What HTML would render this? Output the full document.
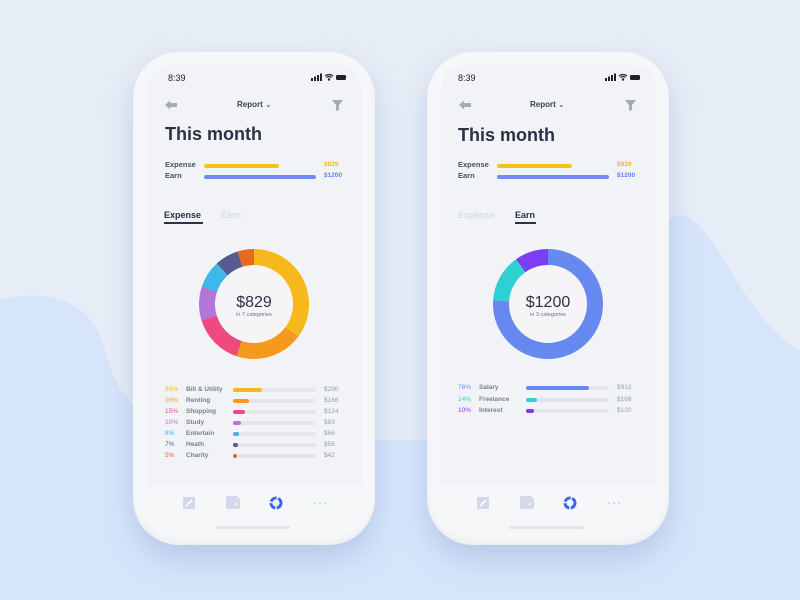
<!DOCTYPE html>
<html><head><meta charset="utf-8"><style>
*{margin:0;padding:0;box-sizing:border-box}
body{width:800px;height:600px;overflow:hidden;background:#e7edf6;font-family:"Liberation Sans",sans-serif;position:relative}
.a{position:absolute}
.phone{position:absolute;top:52px;width:242px;height:493px;border-radius:46px;background:#f6f7f9;box-shadow:0 14px 30px rgba(120,150,200,.35),inset 0 -4px 6px rgba(0,0,0,.04)}
.scr{position:absolute;left:14px;top:13px;width:215px;height:421px;background:#f1f3f6;border-radius:26px 26px 0 0}
.t{position:absolute;white-space:nowrap}
.lbl{font-size:7.5px;color:#4a5064;font-weight:bold}
.row{position:absolute;left:32px;width:180px;height:8px;font-size:6.5px}
.row .p{position:absolute;left:0;top:0}
.row .n{position:absolute;left:21px;top:0;color:#7a7f8c;font-weight:bold}
.row .tr{position:absolute;left:68px;top:2px;width:83px;height:4px;border-radius:2px;background:#e4e6eb}
.row .f{position:absolute;left:0;top:0;height:4px;border-radius:2px}
.row .v{position:absolute;left:159px;top:0;color:#9a9ea8}
</style></head><body>
<svg class="a" style="left:0;top:0" width="800" height="600">
<path d="M0 300 C60 285 95 310 105 350 C118 405 150 430 220 440 L580 440 C640 430 650 300 660 240 C672 195 700 215 730 270 C760 320 785 345 800 350 L800 600 L0 600Z" fill="#d7e5fb"/>
</svg>

<!-- LEFT PHONE -->
<div class="phone" style="left:133px">
<div class="scr"></div>
<div class="t" style="left:35px;top:21px;font-size:9px;color:#222">8:39</div>
<svg class="a" style="left:178px;top:21px" width="36" height="9"><rect x="0" y="5" width="2" height="3" fill="#222"/><rect x="3" y="3.5" width="2" height="4.5" fill="#222"/><rect x="6" y="2" width="2" height="6" fill="#222"/><rect x="9" y="0.5" width="2" height="7.5" fill="#222"/><path d="M14 3 Q18 0 22 3 M15.5 4.5 Q18 2.5 20.5 4.5" stroke="#222" stroke-width="1.2" fill="none"/><circle cx="18" cy="6.5" r="1.2" fill="#222"/><rect x="25" y="2" width="10" height="5" rx="1.2" fill="#222"/></svg>
<svg class="a" style="left:32px;top:48px" width="13" height="10"><path d="M0 5 L5 0.5 L5 3 L12 3 L12 7 L5 7 L5 9.5Z" fill="#a7abb5"/></svg>
<div class="t" style="left:104px;top:48px;font-size:8px;font-weight:bold;color:#3c4254">Report <span style="font-weight:normal">&#8964;</span></div>
<svg class="a" style="left:199px;top:48px" width="11" height="11"><path d="M0 0 H11 L7 5 V10 L4 11 V5Z" fill="#a7abb5"/></svg>
<div class="t" style="left:32px;top:72px;font-size:18px;font-weight:bold;color:#2b3245">This month</div>
<div class="t lbl" style="left:32px;top:108px">Expense</div>
<div class="a" style="left:71px;top:112px;width:75px;height:4px;border-radius:2px;background:#f5c21b"></div>
<div class="t" style="left:191px;top:109px;font-size:6.5px;font-weight:bold;color:#f3bd1c">$829</div>
<div class="t lbl" style="left:32px;top:119px">Earn</div>
<div class="a" style="left:71px;top:123px;width:112px;height:4px;border-radius:2px;background:#6b8ef0"></div>
<div class="t" style="left:191px;top:120px;font-size:6.5px;font-weight:bold;color:#5f84ee">$1200</div>
<div class="t" style="left:31px;top:158px;font-size:9px;font-weight:bold;color:#2b3245">Expense</div>
<div class="a" style="left:31px;top:170px;width:39px;height:2px;background:#2b3245"></div>
<div class="t" style="left:88px;top:158px;font-size:9px;font-weight:bold;color:#d6ddea">Earn</div>
<svg class="a" style="left:66px;top:197px" width="110" height="110" viewBox="0 0 110 110">
<circle cx="55" cy="55" r="39" fill="#f6f4f6"/>
<g transform="rotate(-90 55 55)" fill="none" stroke-width="16">
<circle cx="55" cy="55" r="47" stroke="#f6b91c" stroke-dasharray="103.4 400" stroke-dashoffset="0"/>
<circle cx="55" cy="55" r="47" stroke="#f59a1c" stroke-dasharray="59.1 400" stroke-dashoffset="-103.4"/>
<circle cx="55" cy="55" r="47" stroke="#ee4a80" stroke-dasharray="44.3 400" stroke-dashoffset="-162.5"/>
<circle cx="55" cy="55" r="47" stroke="#b376d6" stroke-dasharray="29.5 400" stroke-dashoffset="-206.8"/>
<circle cx="55" cy="55" r="47" stroke="#3db8e8" stroke-dasharray="23.6 400" stroke-dashoffset="-236.3"/>
<circle cx="55" cy="55" r="47" stroke="#555a90" stroke-dasharray="20.7 400" stroke-dashoffset="-259.9"/>
<circle cx="55" cy="55" r="47" stroke="#e36a1e" stroke-dasharray="14.8 400" stroke-dashoffset="-280.6"/>
</g>
<text x="55" y="58" text-anchor="middle" font-size="16" fill="#2b3245" font-family="Liberation Sans">$829</text>
<text x="55" y="67" text-anchor="middle" font-size="5.5" fill="#6a6f7c" font-family="Liberation Sans">in 7 categories</text>
</svg>
<div class="row" style="top:334px"><span class="p" style="color:#f6b91c">35%</span><span class="n">Bill &amp; Utility</span><div class="tr"><div class="f" style="width:29px;background:#f6b91c"></div></div><span class="v">$290</span></div>
<div class="row" style="top:345px"><span class="p" style="color:#f59a1c">20%</span><span class="n">Renting</span><div class="tr"><div class="f" style="width:16px;background:#f59a1c"></div></div><span class="v">$166</span></div>
<div class="row" style="top:356px"><span class="p" style="color:#ee4a80">15%</span><span class="n">Shopping</span><div class="tr"><div class="f" style="width:12px;background:#ee4a80"></div></div><span class="v">$124</span></div>
<div class="row" style="top:367px"><span class="p" style="color:#b376d6">10%</span><span class="n">Study</span><div class="tr"><div class="f" style="width:8px;background:#b376d6"></div></div><span class="v">$83</span></div>
<div class="row" style="top:378px"><span class="p" style="color:#3db8e8">8%</span><span class="n">Entertain</span><div class="tr"><div class="f" style="width:6px;background:#3db8e8"></div></div><span class="v">$66</span></div>
<div class="row" style="top:389px"><span class="p" style="color:#555a90">7%</span><span class="n">Heath</span><div class="tr"><div class="f" style="width:5px;background:#555a90"></div></div><span class="v">$58</span></div>
<div class="row" style="top:400px"><span class="p" style="color:#e36a1e">5%</span><span class="n">Charity</span><div class="tr"><div class="f" style="width:4px;background:#e36a1e"></div></div><span class="v">$42</span></div>
<svg class="a" style="left:48px;top:443px" width="160" height="16">
<rect x="2" y="2" width="12" height="12" rx="1" fill="#d3d9ea"/><path d="M5 11 L11 5" stroke="#fff" stroke-width="1.5"/>
<rect x="45" y="3" width="14" height="11" rx="2" fill="#d3d9ea"/><rect x="45" y="1" width="12" height="3" rx="1" fill="#d3d9ea"/><rect x="54" y="8" width="2" height="2" fill="#fff"/>
<circle cx="95" cy="8" r="5" fill="none" stroke="#3566ee" stroke-width="3" stroke-dasharray="7 1.5"/>
<circle cx="134" cy="8" r="1" fill="#c9d3ea"/><circle cx="139" cy="8" r="1" fill="#c9d3ea"/><circle cx="144" cy="8" r="1" fill="#c9d3ea"/>
</svg>
<div class="a" style="left:82px;top:474px;width:75px;height:3px;border-radius:2px;background:#e3e5ea"></div>
</div>

<!-- RIGHT PHONE -->
<div class="phone" style="left:427px">
<div class="scr"></div>
<div class="t" style="left:31px;top:21px;font-size:9px;color:#222">8:39</div>
<svg class="a" style="left:178px;top:21px" width="36" height="9"><rect x="0" y="5" width="2" height="3" fill="#222"/><rect x="3" y="3.5" width="2" height="4.5" fill="#222"/><rect x="6" y="2" width="2" height="6" fill="#222"/><rect x="9" y="0.5" width="2" height="7.5" fill="#222"/><path d="M14 3 Q18 0 22 3 M15.5 4.5 Q18 2.5 20.5 4.5" stroke="#222" stroke-width="1.2" fill="none"/><circle cx="18" cy="6.5" r="1.2" fill="#222"/><rect x="25" y="2" width="10" height="5" rx="1.2" fill="#222"/></svg>
<svg class="a" style="left:32px;top:48px" width="13" height="10"><path d="M0 5 L5 0.5 L5 3 L12 3 L12 7 L5 7 L5 9.5Z" fill="#a7abb5"/></svg>
<div class="t" style="left:103px;top:48px;font-size:8px;font-weight:bold;color:#3c4254">Report <span style="font-weight:normal">&#8964;</span></div>
<svg class="a" style="left:198px;top:48px" width="11" height="11"><path d="M0 0 H11 L7 5 V10 L4 11 V5Z" fill="#a7abb5"/></svg>
<div class="t" style="left:31px;top:73px;font-size:18px;font-weight:bold;color:#2b3245">This month</div>
<div class="t lbl" style="left:31px;top:108px">Expense</div>
<div class="a" style="left:70px;top:112px;width:75px;height:4px;border-radius:2px;background:#f5c21b"></div>
<div class="t" style="left:190px;top:109px;font-size:6.5px;font-weight:bold;color:#f3bd1c">$829</div>
<div class="t lbl" style="left:31px;top:119px">Earn</div>
<div class="a" style="left:70px;top:123px;width:112px;height:4px;border-radius:2px;background:#6b8ef0"></div>
<div class="t" style="left:190px;top:120px;font-size:6.5px;font-weight:bold;color:#5f84ee">$1200</div>
<div class="t" style="left:31px;top:158px;font-size:9px;font-weight:bold;color:#d6ddea">Expense</div>
<div class="t" style="left:88px;top:158px;font-size:9px;font-weight:bold;color:#2b3245">Earn</div>
<div class="a" style="left:88px;top:170px;width:21px;height:2px;background:#2b3245"></div>
<svg class="a" style="left:66px;top:197px" width="110" height="110" viewBox="0 0 110 110">
<circle cx="55" cy="55" r="39" fill="#f6f4f6"/>
<g transform="rotate(-90 55 55)" fill="none" stroke-width="16">
<circle cx="55" cy="55" r="47" stroke="#6689ef" stroke-dasharray="224.4 400" stroke-dashoffset="0"/>
<circle cx="55" cy="55" r="47" stroke="#2fd0d2" stroke-dasharray="41.3 400" stroke-dashoffset="-224.4"/>
<circle cx="55" cy="55" r="47" stroke="#7b3ef2" stroke-dasharray="29.6 400" stroke-dashoffset="-265.7"/>
</g>
<text x="55" y="58" text-anchor="middle" font-size="16" fill="#2b3245" font-family="Liberation Sans">$1200</text>
<text x="55" y="67" text-anchor="middle" font-size="5.5" fill="#6a6f7c" font-family="Liberation Sans">in 3 categories</text>
</svg>
<div class="row" style="top:332px;left:31px"><span class="p" style="color:#6689ef">76%</span><span class="n">Salary</span><div class="tr"><div class="f" style="width:63px;background:#6689ef"></div></div><span class="v">$912</span></div>
<div class="row" style="top:344px;left:31px"><span class="p" style="color:#2fd0d2">14%</span><span class="n">Freelance</span><div class="tr"><div class="f" style="width:11px;background:#2fd0d2"></div></div><span class="v">$168</span></div>
<div class="row" style="top:355px;left:31px"><span class="p" style="color:#7b3ef2">10%</span><span class="n">Interest</span><div class="tr"><div class="f" style="width:8px;background:#7b3ef2"></div></div><span class="v">$120</span></div>
<svg class="a" style="left:48px;top:443px" width="160" height="16">
<rect x="2" y="2" width="12" height="12" rx="1" fill="#d3d9ea"/><path d="M5 11 L11 5" stroke="#fff" stroke-width="1.5"/>
<rect x="45" y="3" width="14" height="11" rx="2" fill="#d3d9ea"/><rect x="45" y="1" width="12" height="3" rx="1" fill="#d3d9ea"/><rect x="54" y="8" width="2" height="2" fill="#fff"/>
<circle cx="95" cy="8" r="5" fill="none" stroke="#3566ee" stroke-width="3" stroke-dasharray="7 1.5"/>
<circle cx="134" cy="8" r="1" fill="#c9d3ea"/><circle cx="139" cy="8" r="1" fill="#c9d3ea"/><circle cx="144" cy="8" r="1" fill="#c9d3ea"/>
</svg>
<div class="a" style="left:82px;top:474px;width:75px;height:3px;border-radius:2px;background:#e3e5ea"></div>
</div>
</body></html>
